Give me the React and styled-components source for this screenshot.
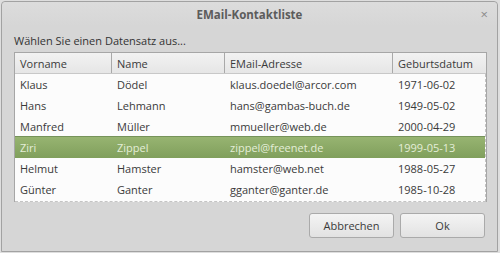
import React from 'react'
import styled, { createGlobalStyle } from 'styled-components'

const GlobalStyle = createGlobalStyle`
  html, body {
    margin: 0;
    padding: 0;
    background: #dedede;
  }
  body {
    font-family: "Open Sans", "Noto Sans", sans-serif;
    font-size: 11px;
    color: #3c3c3c;
  }
`

const contacts = [
  { first: 'Klaus', last: 'Dödel', mail: 'klaus.doedel@arcor.com', born: '1971-06-02' },
  { first: 'Hans', last: 'Lehmann', mail: 'hans@gambas-buch.de', born: '1949-05-02' },
  { first: 'Manfred', last: 'Müller', mail: 'mmueller@web.de', born: '2000-04-29' },
  { first: 'Ziri', last: 'Zippel', mail: 'zippel@freenet.de', born: '1999-05-13' },
  { first: 'Helmut', last: 'Hamster', mail: 'hamster@web.net', born: '1988-05-27' },
  { first: 'Günter', last: 'Ganter', mail: 'gganter@ganter.de', born: '1985-10-28' },
]

const selected = 3

const App = () => {
  return (
    <>
      <GlobalStyle />
      <Window>
        <TitleBar>
          <span />
          <Title>EMail-Kontaktliste</Title>
          <Close>×</Close>
        </TitleBar>
        <Body>
          <Label>Wählen Sie einen Datensatz aus...</Label>
          <Table>
            <HeadRow>
              <HeadCell>Vorname</HeadCell>
              <HeadCell>Name</HeadCell>
              <HeadCell>EMail-Adresse</HeadCell>
              <HeadCell $last>Geburtsdatum</HeadCell>
            </HeadRow>
            <Rows>
              {contacts.map((c, i) => (
                <Row key={c.first} $active={i === selected}>
                  <Cell>{c.first}</Cell>
                  <Cell>{c.last}</Cell>
                  <Cell>{c.mail}</Cell>
                  <Cell>{c.born}</Cell>
                </Row>
              ))}
            </Rows>
          </Table>
          <Footer>
            <Button>Abbrechen</Button>
            <Button>Ok</Button>
          </Footer>
        </Body>
      </Window>
    </>
  )
}

export default App

const Window = styled.div`
  box-sizing: border-box;
  width: 497px;
  height: 251px;
  margin: 1px 0 0 1px;
  border: 1px solid #a2a2a2;
  border-radius: 4px 4px 0 0;
  background: #d6d6d6;
  display: flex;
  flex-direction: column;
`

const TitleBar = styled.div`
  height: 24px;
  display: grid;
  grid-template-columns: 1fr auto 1fr;
  align-items: center;
  background: linear-gradient(#dcdcdc, #d6d6d6);
  border-radius: 4px 4px 0 0;
`

const Title = styled.div`
  font-weight: bold;
  font-size: 11.5px;
  color: #5c5c5c;
`

const Close = styled.div`
  justify-self: end;
  margin-right: 9px;
  font-size: 13px;
  color: #8a8a8a;
`

const Body = styled.div`
  flex: 1;
  display: flex;
  flex-direction: column;
  padding: 0 10px 0 12px;
`

const Label = styled.div`
  margin-top: 7px;
  height: 19px;
  color: #333;
`

const columns = '97px 113px 168px 1fr'

const Table = styled.div`
  box-sizing: border-box;
  width: 473px;
  height: 150px;
  border: 1px solid #a6a6a6;
  border-bottom: none;
  background: #fcfcfc;
  display: flex;
  flex-direction: column;
`

const HeadRow = styled.div`
  display: grid;
  grid-template-columns: ${columns};
  height: 20px;
  background: linear-gradient(#f2f2f2, #e6e6e6);
  border-bottom: 1px solid #c8c8c8;
`

const HeadCell = styled.div`
  display: flex;
  align-items: center;
  padding-left: 5px;
  border-right: ${p => (p.$last ? 'none' : '1px solid #a9a9a9')};
  color: #3a3a3a;
`

const Rows = styled.div`
  flex: 1;
  border-right: 1px dashed #c4c4c4;
  border-bottom: 1px dashed #c4c4c4;
`

const Row = styled.div`
  display: grid;
  grid-template-columns: ${columns};
  height: 21px;
  align-items: center;
  color: ${p => (p.$active ? '#e4eed8' : '#3a3a3a')};
  background: ${p => (p.$active ? 'linear-gradient(#97b471, #809f5c)' : 'transparent')};
  border-top: ${p => (p.$active ? '1px solid #76935a' : 'none')};
  margin-top: ${p => (p.$active ? '-1px' : '0')};
`

const Cell = styled.div`
  padding-left: 5px;
  white-space: nowrap;
`

const Footer = styled.div`
  display: flex;
  justify-content: flex-end;
  gap: 6px;
  margin-top: 11px;
  padding-right: 2px;
`

const Button = styled.button`
  box-sizing: border-box;
  width: 85px;
  height: 25px;
  font-family: inherit;
  font-size: 11px;
  color: #3a3a3a;
  border: 1px solid #aaaaaa;
  border-radius: 3px;
  background: linear-gradient(#f4f4f4, #e2e2e2);
`
